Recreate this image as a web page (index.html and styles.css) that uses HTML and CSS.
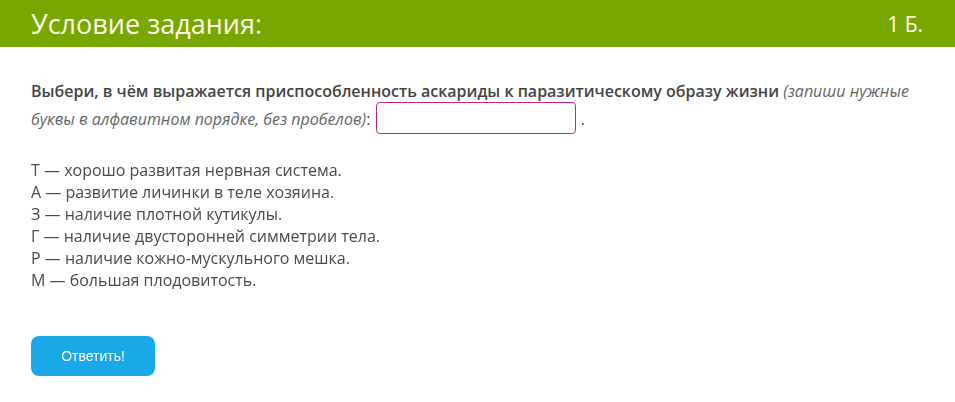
FILE: index.html
```html
<!DOCTYPE html>
<html lang="ru">
<head>
  <meta charset="UTF-8">
  <title>Условие задания</title>
  <link rel="stylesheet" href="styles.css">
</head>
<body>
  <div class="task-header">
    <span class="task-title">Условие задания:</span>
    <span class="task-points">1 Б.</span>
  </div>

  <div class="task-body">
    <p class="question">
      <b>Выбери, в чём выражается приспособленность аскариды к паразитическому образу жизни</b>
      <i>(запиши нужные буквы в алфавитном порядке, без пробелов)</i>:
      <input type="text" class="answer-input" autofocus>
      .
    </p>

    <div class="options">
      Т — хорошо развитая нервная система.<br>
      А — развитие личинки в теле хозяина.<br>
      З — наличие плотной кутикулы.<br>
      Г — наличие двусторонней симметрии тела.<br>
      Р — наличие кожно-мускульного мешка.<br>
      М — большая плодовитость.
    </div>

    <button class="submit-btn">Ответить!</button>
  </div>
</body>
</html>
```

FILE: styles.css
```css
body {
  margin: 0;
  padding: 0;
  font-family: "Open Sans", sans-serif;
  color: #4b4b4b;
  background-color: #fff;
}

.task-header {
  display: flex;
  justify-content: space-between;
  align-items: center;
  height: 47px;
  padding: 0 32px 0 31px;
  background-color: #77a700;
  color: #fffbe6;
}

.task-title {
  font-size: 27px;
}

.task-points {
  font-size: 21px;
}

.task-body {
  padding: 0 31px;
}

.question {
  margin: 30px 0 0;
  font-size: 16px;
  line-height: 28px;
}

.question b {
  font-weight: 600;
  color: #444;
}

.question i {
  color: #666;
}

.answer-input {
  width: 200px;
  height: 32px;
  box-sizing: border-box;
  margin: -6px 1px;
  padding: 0 6px;
  border: 1px solid #c2267d;
  border-radius: 4px;
  outline: none;
  vertical-align: 1px;
  font-family: "Open Sans", sans-serif;
  font-size: 16px;
  color: #333;
}

.options {
  margin-top: 26px;
  font-size: 16px;
  line-height: 22px;
}

.submit-btn {
  margin-top: 45px;
  width: 124px;
  height: 40px;
  border: none;
  border-radius: 8px;
  background-color: #1aa9e8;
  color: #fff;
  font-family: "Liberation Sans", Arial, sans-serif;
  font-size: 14px;
  cursor: pointer;
}
```
